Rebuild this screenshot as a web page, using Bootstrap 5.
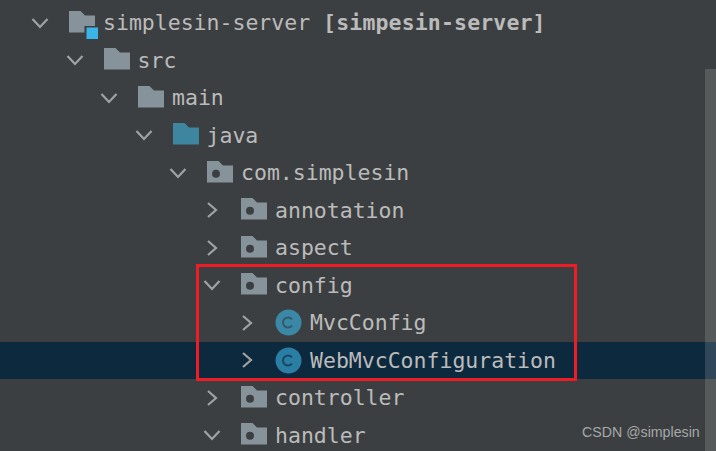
<!DOCTYPE html>
<html lang="en">
<head>
<meta charset="utf-8">
<title>Project tree</title>
<link href="https://cdn.jsdelivr.net/npm/bootstrap@5.3.0/dist/css/bootstrap.min.css" rel="stylesheet">
<style>
html,body{height:100%;}
body{background:#3c3f41;overflow:hidden;}
.ide-pane{width:716px;height:451px;background:#3c3f41;overflow:hidden;padding-top:4px;}
.ide-row{height:37.5px;font-family:"DejaVu Sans Mono","Liberation Mono",monospace;font-size:21.5px;line-height:1;color:#bbbbbb;white-space:nowrap;}
.ide-row.is-sel{background:#0d293e;}
.l0{padding-left:31px;}.l1{padding-left:65.5px;}.l2{padding-left:100px;}.l3{padding-left:134.5px;}
.l4{padding-left:169px;}.l5{padding-left:203px;}.l6{padding-left:238px;}
.tw{width:18px;height:12px;flex:none;margin-right:19px;overflow:visible;}
.ic{width:27px;height:24px;flex:none;margin-right:8px;overflow:visible;}
.ic-c{width:27px;height:27px;flex:none;margin-right:8px;}
.bold{font-weight:700;margin-left:13px;letter-spacing:.15px;}
.red-box{position:absolute;left:196px;top:264px;width:381px;height:117px;border:3px solid #ee1c25;}
.scroll-thumb{position:absolute;left:705px;top:69px;width:11px;height:382px;background:rgba(255,255,255,.14);}
.mark-w{position:absolute;left:582px;top:425px;font:14.2px/1 "Liberation Sans",Arial,sans-serif;color:#a6a8a9;}
</style>
</head>
<body>
<svg width="0" height="0" class="d-block">
<defs>
<path id="dn" d="M1.500 2 L9 10 L16.500 2" fill="none" stroke="#a0a3a5" stroke-width="2.200"/>
<path id="rt" d="M5 -1 L13 6 L5 13" fill="none" stroke="#a0a3a5" stroke-width="2.200"/>
<path id="fd" d="M1 0 H12.500 L17 4.500 H27 V21.500 H1Z" fill="#87939a"/>
</defs>
</svg>
<div class="ide-pane position-relative">
<div class="ide-row l0 d-flex align-items-center"><svg class="tw"><use href="#dn"/></svg><svg class="ic" viewBox="0 0 27 24"><use href="#fd"/><rect x="16.500" y="15" width="14.500" height="14" fill="#3c3f41"/><rect x="18.500" y="16.500" width="11.500" height="11.500" fill="#3bb5e8"/></svg><span>simplesin-server</span><span class="bold">[simpesin-server]</span></div>
<div class="ide-row l1 d-flex align-items-center"><svg class="tw"><use href="#dn"/></svg><svg class="ic" viewBox="0 0 27 24"><use href="#fd"/></svg><span>src</span></div>
<div class="ide-row l2 d-flex align-items-center"><svg class="tw"><use href="#dn"/></svg><svg class="ic" viewBox="0 0 27 24"><use href="#fd"/></svg><span>main</span></div>
<div class="ide-row l3 d-flex align-items-center"><svg class="tw"><use href="#dn"/></svg><svg class="ic" viewBox="0 0 27 24"><path d="M1 0 H12.500 L17 4.500 H27 V21.500 H1Z" fill="#3e86a0"/></svg><span>java</span></div>
<div class="ide-row l4 d-flex align-items-center"><svg class="tw"><use href="#dn"/></svg><svg class="ic" viewBox="0 0 27 24"><use href="#fd"/><circle cx="10" cy="12.750" r="4" fill="#3c3f41"/></svg><span>com.simplesin</span></div>
<div class="ide-row l5 d-flex align-items-center"><svg class="tw"><use href="#rt"/></svg><svg class="ic" viewBox="0 0 27 24"><use href="#fd"/><circle cx="10" cy="12.750" r="4" fill="#3c3f41"/></svg><span>annotation</span></div>
<div class="ide-row l5 d-flex align-items-center"><svg class="tw"><use href="#rt"/></svg><svg class="ic" viewBox="0 0 27 24"><use href="#fd"/><circle cx="10" cy="12.750" r="4" fill="#3c3f41"/></svg><span>aspect</span></div>
<div class="ide-row l5 d-flex align-items-center"><svg class="tw"><use href="#dn"/></svg><svg class="ic" viewBox="0 0 27 24"><use href="#fd"/><circle cx="10" cy="12.750" r="4" fill="#3c3f41"/></svg><span>config</span></div>
<div class="ide-row l6 d-flex align-items-center"><svg class="tw"><use href="#rt"/></svg><svg class="ic-c" viewBox="0 0 27 27"><circle cx="13.500" cy="13.500" r="13" fill="#3a88a5"/><path d="M17 10.500 A5 5 0 1 0 17 16.500" fill="none" stroke="#33596b" stroke-width="2"/></svg><span>MvcConfig</span></div>
<div class="ide-row l6 is-sel d-flex align-items-center"><svg class="tw"><use href="#rt"/></svg><svg class="ic-c" viewBox="0 0 27 27"><circle cx="13.500" cy="13.500" r="13" fill="#2a7ea4"/><path d="M17 10.500 A5 5 0 1 0 17 16.500" fill="none" stroke="#174763" stroke-width="2"/></svg><span>WebMvcConfiguration</span></div>
<div class="ide-row l5 d-flex align-items-center"><svg class="tw"><use href="#rt"/></svg><svg class="ic" viewBox="0 0 27 24"><use href="#fd"/><circle cx="10" cy="12.750" r="4" fill="#3c3f41"/></svg><span>controller</span></div>
<div class="ide-row l5 d-flex align-items-center"><svg class="tw"><use href="#dn"/></svg><svg class="ic" viewBox="0 0 27 24"><use href="#fd"/><circle cx="10" cy="12.750" r="4" fill="#3c3f41"/></svg><span>handler</span></div>
<div class="scroll-thumb"></div>
<div class="red-box"></div>
<div class="mark-w">CSDN @simplesin</div>
</div>
</body>
</html>
